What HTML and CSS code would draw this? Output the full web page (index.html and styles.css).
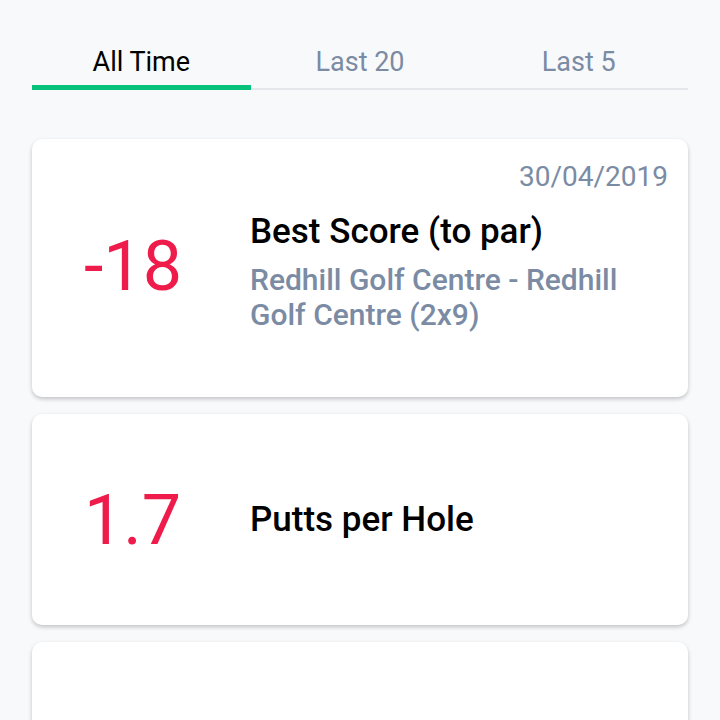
FILE: index.html
```html
<!DOCTYPE html>
<html lang="en">
<head>
  <meta charset="UTF-8">
  <meta name="viewport" content="width=device-width, initial-scale=1.0">
  <title>Stats</title>
  <link rel="stylesheet" href="styles.css">
</head>
<body>
  <div class="page">
    <nav class="tabs">
      <a href="#" class="tab active">All Time</a>
      <a href="#" class="tab">Last 20</a>
      <a href="#" class="tab">Last 5</a>
    </nav>

    <div class="stat-list">
      <div class="stat-card best">
        <div class="stat-date">30/04/2019</div>
        <div class="stat-row">
          <div class="stat-value">-18</div>
          <div class="stat-info">
            <div class="stat-label">Best Score (to par)</div>
            <div class="stat-course">Redhill Golf Centre - Redhill Golf Centre (2x9)</div>
          </div>
        </div>
      </div>

      <div class="stat-card">
        <div class="stat-row">
          <div class="stat-value">1.7</div>
          <div class="stat-info">
            <div class="stat-label">Putts per Hole</div>
          </div>
        </div>
      </div>

      <div class="stat-card">
      </div>
    </div>
  </div>
</body>
</html>
```

FILE: styles.css
```css
body {
  margin: 0;
  padding: 0;
  background: #f8f9fb;
  font-family: Roboto, "Noto Sans", sans-serif;
  color: #000;
}

.page {
  padding: 0 32px;
}

/* period switcher */
.tabs {
  display: flex;
  padding-top: 45px;
  border-bottom: 2px solid #e3e6ea;
}
.tab {
  flex: 1;
  text-align: center;
  font-size: 27px;
  line-height: 34px;
  padding-bottom: 6px;
  color: #7b8ba3;
  text-decoration: none;
  margin-bottom: -2px;
  border-bottom: 5px solid transparent;
}
.tab.active {
  color: #000;
  border-bottom-color: #06c27b;
}

.stat-list {
  display: flex;
  flex-direction: column;
  gap: 17px;
  margin-top: 49px;
}

.stat-card {
  background: #fff;
  border-radius: 10px;
  box-shadow: 0 2px 4px rgba(0, 0, 0, 0.22);
  min-height: 211px;
  display: flex;
  flex-direction: column;
  justify-content: center;
  box-sizing: border-box;
}
.stat-card.best {
  min-height: 258px;
  justify-content: flex-start;
  padding: 21px 20px 0 0;
}

.stat-date {
  text-align: right;
  font-size: 28px;
  line-height: 34px;
  color: #7b8ba3;
}

.stat-row {
  display: flex;
  align-items: center;
}
.best .stat-row {
  align-items: flex-start;
  margin-top: 17px;
}
.stat-value {
  flex-shrink: 0;
  width: 218px;
  box-sizing: border-box;
  padding-left: 52px;
  font-size: 70px;
  line-height: 70px;
  color: #ee1b4b;
}
.best .stat-value {
  margin-top: 20px;
}
.stat-label {
  font-size: 35px;
  line-height: 42px;
  font-weight: 500;
}
.stat-course {
  margin-top: 9px;
  font-size: 30px;
  line-height: 35px;
  color: #7b8ba3;
  font-weight: 500;
}
```
